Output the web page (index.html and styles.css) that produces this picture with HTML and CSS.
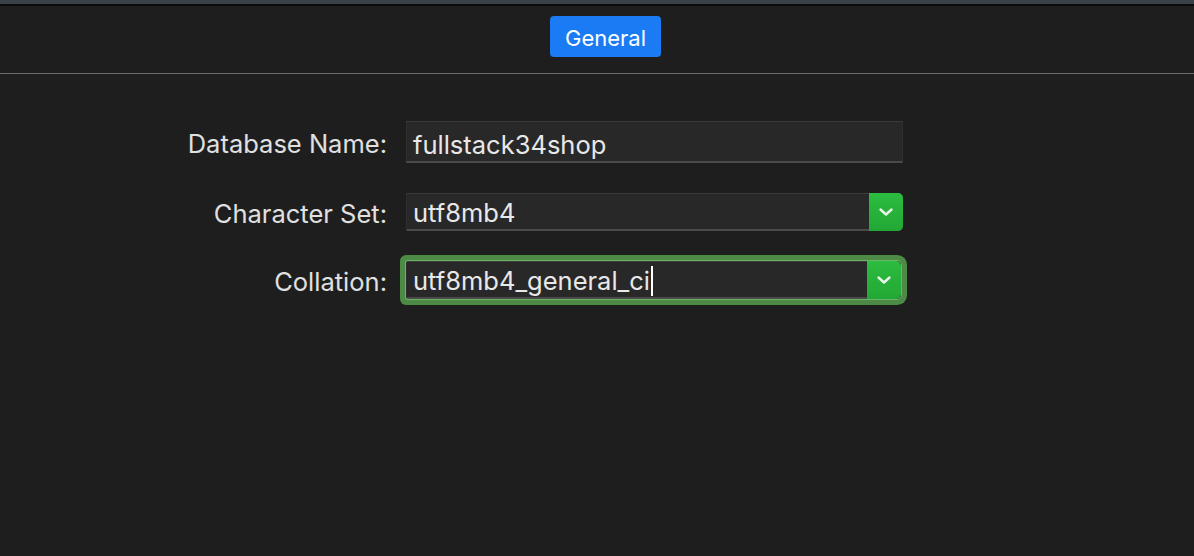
FILE: index.html
```html
<!DOCTYPE html>
<html>
<head>
<meta charset="utf-8">
<link rel="stylesheet" href="styles.css">
</head>
<body>
<div class="topstrip"></div>
<div class="toolbar">
  <button class="tab">General</button>
</div>
<div class="form">
  <label class="label">Database Name:</label>
  <div class="field text-field"><span class="value">fullstack34shop</span></div>

  <label class="label">Character Set:</label>
  <div class="field combo"><span class="value">utf8mb4</span>
    <span class="drop"><svg width="16" height="10" viewBox="0 0 16 10"><path d="M2.5 2.5 L8 7.5 L13.5 2.5" fill="none" stroke="#e8f5e8" stroke-width="2.4" stroke-linecap="round" stroke-linejoin="round"/></svg></span>
  </div>

  <label class="label">Collation:</label>
  <div class="field combo focused"><span class="value">utf8mb4_general_ci<span class="caret"></span></span>
    <span class="drop"><svg width="16" height="10" viewBox="0 0 16 10"><path d="M2.5 2.5 L8 7.5 L13.5 2.5" fill="none" stroke="#e8f5e8" stroke-width="2.4" stroke-linecap="round" stroke-linejoin="round"/></svg></span>
  </div>
</div>
</body>
</html>
```
FILE: styles.css
```css
html, body {
  margin: 0;
  padding: 0;
  background: #1e1e1e;
  height: 100%;
  font-family: "Inter", "Noto Sans", "Liberation Sans", sans-serif;
}
.topstrip {
  height: 4px;
  background: #3b4149;
  border-bottom: 2px solid #0a0a0a;
}
.toolbar {
  height: 68px;
  box-sizing: border-box;
  display: flex;
  justify-content: center;
  align-items: flex-start;
  padding-top: 10px;
  padding-left: 17px;
  border-bottom: 1px solid #6b6b6b;
}
.tab {
  width: 111px;
  height: 41px;
  border: none;
  border-radius: 4px;
  background: #1b7bf4;
  color: #ffffff;
  font-family: "Inter", "Noto Sans", "Liberation Sans", sans-serif;
  font-size: 22px;
  padding: 2px 0 0 0;
}
.form {
  display: grid;
  grid-template-columns: 207px 497px;
  column-gap: 19px;
  row-gap: 30px;
  padding-left: 180px;
  padding-top: 47px;
  align-items: center;
}
.label {
  text-align: right;
  color: #e0e0e0;
  font-size: 25.5px;
  padding-top: 2px;
}
.field {
  box-sizing: border-box;
  background: #282828;
  border-top: 1px solid #3a3a3a;
  border-left: 1px solid #2f2f2f;
  border-right: 1px solid #2f2f2f;
  border-bottom: 2px solid #4a4a4a;
  display: flex;
  align-items: center;
  position: relative;
}
.text-field {
  height: 42px;
  padding-left: 6px;
  padding-top: 3px;
}
.combo {
  height: 38px;
  padding-left: 6px;
  border-radius: 0 5px 5px 0;
}
.value {
  color: #e8e8e8;
  font-size: 25.5px;
  flex: 1;
  display: flex;
  align-items: center;
  white-space: nowrap;
  padding-top: 2px;
}
.caret {
  display: inline-block;
  width: 2px;
  height: 30px;
  background: #ffffff;
  margin-left: 1px;
}
.drop {
  width: 34px;
  align-self: stretch;
  margin: -1px -1px -2px 0;
  background: linear-gradient(#2cbc40, #22a835);
  border-radius: 0 5px 5px 0;
  display: flex;
  align-items: center;
  justify-content: center;
}
.focused {
  width: 495px;
  box-shadow: 0 0 0 1px #6cb465, 0 0 0 6px #4c8a46;
  border-radius: 2px 4px 4px 2px;
}
```
